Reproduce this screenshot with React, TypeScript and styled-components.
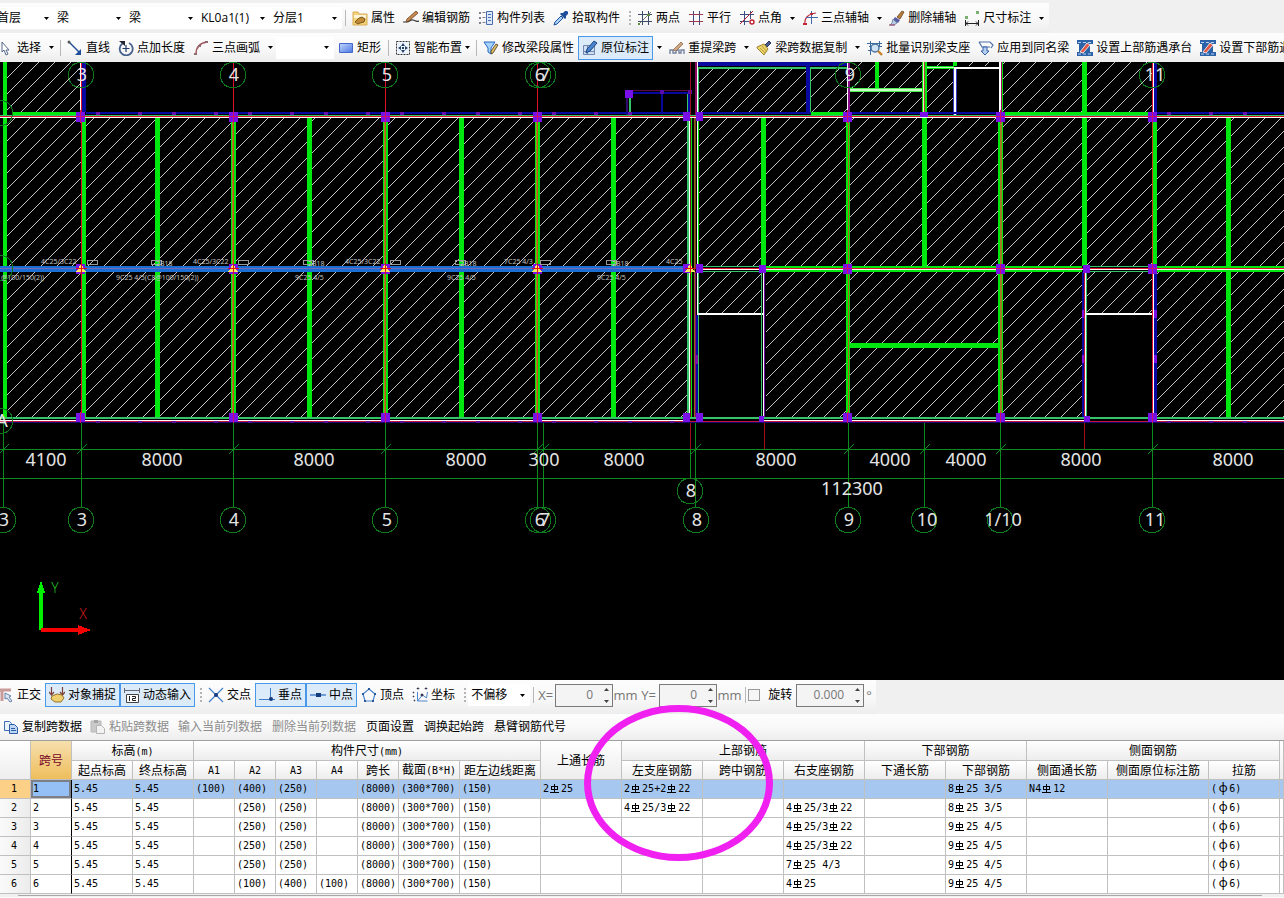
import React from "react";
import styled, { createGlobalStyle, css } from "styled-components";

const GlobalStyle = createGlobalStyle`
  *, *::before, *::after { box-sizing: border-box; }
  body { margin: 0; background: #f0f0f0; }
  button, input, select { font: inherit; color: inherit; }
`;

const Page = styled.div`
  display: flex;
  flex-direction: column;
  min-height: 100vh;
  overflow: hidden;
  font-family: "Open Sans", "Noto Sans CJK SC", sans-serif;
  font-size: 12px;
  line-height: 16px;
  color: #000;
`;

/* ---------- toolbars ---------- */

const ToolRow = styled.div<{ $h: number; $fit?: boolean; $top?: number; $lift?: number; $indent?: number }>`
  display: flex;
  align-items: center;
  flex: none;
  height: ${(p) => p.$h}px;
  margin-top: ${(p) => p.$top ?? 0}px;
  width: ${(p) => (p.$fit ? "fit-content" : "auto")};
  margin-left: -6px;
  padding: 0 2px ${(p) => p.$lift ?? 0}px ${(p) => p.$indent ?? 0}px;
  white-space: nowrap;
  background: linear-gradient(#fdfdfd, #f9f9f9 50%, #ededed);
`;

const ToolButton = styled.button<{ $active?: boolean; $textOnly?: boolean }>`
  display: flex;
  align-items: center;
  flex: none;
  gap: 3px;
  height: 24px;
  padding: 0 ${(p) => (p.$textOnly ? 5 : 4)}px;
  border: 0;
  background: transparent;
  white-space: nowrap;
  &:disabled { color: #8c8c8c; }
  ${(p) =>
    p.$active &&
    css`
      background: #dcebf9;
      box-shadow: inset 0 0 0 1px #4a98e8;
    `}
`;

const CaretButton = styled.button`
  display: flex;
  align-items: center;
  flex: none;
  height: 24px;
  border: 0;
  background: transparent;
  padding: 0 3px 0 4px;
`;

const Separator = styled.span`
  flex: none;
  width: 6px;
  height: 16px;
  background: linear-gradient(#b8b8b8, #b8b8b8) 3px 0 / 1px 100% no-repeat;
`;

const Grip = styled.span`
  flex: none;
  width: 9px;
  height: 15px;
  background: repeating-linear-gradient(#b4b4b4 0 2px, transparent 2px 4px) 5px 0 / 2px 100% no-repeat;
`;

const ComboBox = styled.span<{ $w: number }>`
  display: grid;
  flex: none;
  align-items: center;
  width: ${(p) => p.$w}px;
  height: 22px;
  background: #fff;
  > * { grid-area: 1 / 1; }
  > svg { justify-self: end; margin-right: 5px; pointer-events: none; }
`;

const Select = styled.select`
  appearance: none;
  width: 100%;
  height: 22px;
  padding: 0 3px;
  border: 0;
  background: transparent;
`;

const Caret = () => (
  <svg width="5" height="3" aria-hidden="true">
    <path d="M0 0h5L2.5 3z" fill="#000" />
  </svg>
);

const Combo = ({ w, value, label }: { w: number; value: string; label: string }) => (
  <ComboBox $w={w}>
    <Select aria-label={label} defaultValue={value}>
      <option value={value}>{value}</option>
    </Select>
    <Caret />
  </ComboBox>
);

const UnitLabel = styled.label<{ $w: number }>`
  flex: none;
  width: ${(p) => p.$w}px;
  text-align: center;
  color: #777;
  font-size: 13px;
`;

const SpinBox = styled.span<{ $w: number }>`
  display: flex;
  flex: none;
  width: ${(p) => p.$w}px;
  height: 23px;
  border: 1px solid #7a7a7a;
  background: #f4f4f4;
  color: #777;
`;

const SpinInput = styled.input`
  flex: 1;
  min-width: 0;
  border: 0;
  padding: 0 8px 0 0;
  background: transparent;
  text-align: right;
`;

const SpinArrows = styled.span`
  display: flex;
  flex-direction: column;
  justify-content: space-between;
  align-items: center;
  width: 11px;
  padding: 3px 0;
`;

const CheckBox = styled.input`
  appearance: none;
  flex: none;
  width: 12px;
  height: 12px;
  margin: 0 8px 0 0;
  border: 1px solid #9a9a9a;
  background: #f6f6f6;
`;

const PlainLabel = styled.label`
  flex: none;
  margin-right: 4px;
`;

const Spin = ({ id, w, value }: { id: string; w: number; value: string }) => (
  <SpinBox $w={w}>
    <SpinInput id={id} defaultValue={value} />
    <SpinArrows>
      <svg width="5" height="3" aria-hidden="true"><path d="M0 3h5L2.5 0z" fill="#444" /></svg>
      <svg width="5" height="3" aria-hidden="true"><path d="M0 0h5L2.5 3z" fill="#444" /></svg>
    </SpinArrows>
  </SpinBox>
);

/* ---------- icons ---------- */

const navy = "#1f4e9a";
const icons: Record<string, React.ReactNode> = {
  props: (
    <>
      <path d="M1 2h5l1 2h8v11H1z" fill="#f4d27a" stroke="#d8ac55" />
      <path d="M2 5h12v3H2z" fill="#fff6da" />
      <path d="M3 12l4-4 3-1 3 2-1 3-4 1-2 1z" fill="#c28a35" stroke="#5f430f" strokeWidth=".8" />
    </>
  ),
  edit: (
    <>
      <path d="M0 12h4c3 0 3-3 6-2s3 2 6 1" fill="none" stroke="#333" strokeWidth="1.2" />
      <path d="M4 9L13 1l2 2-9 8-3 1z" fill="#c48a50" stroke="#6d4420" strokeWidth=".8" />
    </>
  ),
  list: (
    <>
      <path d="M1 2h2v2H1zM1 7h2v2H1zM1 12h2v2H1z" fill="#7c8290" />
      <path d="M4.500 2.500h3M4.500 7.500h3M4.500 12.500h3" stroke="#7c8290" />
      <path d="M8.500 1.500h6v13h-6z" fill="#dbe8fa" stroke="#4a6db0" />
      <path d="M10 4.500h3M10 7.500h3M10 10.500h3" stroke="#4a6db0" />
    </>
  ),
  picker: (
    <>
      <path d="M1 15l1-3 6-6 2 2-6 6z" fill="#a9d4f7" stroke={navy} />
      <path d="M8 3l2 0 2-2h2l1 1v2l-2 2v2l-1 1-5-5z" fill={navy} />
    </>
  ),
  twoPoint: (
    <>
      <path d="M5.500 1v14M11.500 1v14M1 4.500h14M1 11.500h14" stroke="#3d4a6c" />
      <path d="M2 14L14 2" stroke="#555" strokeWidth=".8" />
      <path d="M1 13h2v2H1zM10 4h3v2h-3z" fill="#5d8a3c" />
    </>
  ),
  parallel: (
    <>
      <path d="M5.500 1v14M11.500 1v14" stroke="#3b4d80" />
      <path d="M1 4.500h14M1 11.500h14" stroke="#a33a4b" />
    </>
  ),
  angle: (
    <>
      <path d="M5.500 1v14M11.500 1v8M1 4.500h14M1 11.500h9" stroke="#3b4d80" />
      <path d="M1 14L14 1" stroke="#b32030" />
      <circle cx="13" cy="12" r="2" fill="#fff" stroke="#c02030" strokeWidth="1.4" />
    </>
  ),
  arcAxis: (
    <>
      <path d="M3 15C2 8 6 4 14 3" fill="none" stroke="#c0283a" strokeWidth="1.2" />
      <path d="M9.500 1v13M4 7.500h12" stroke="#4768a8" />
      <path d="M1 13h4v2H1zM8 3h3v2H8z" fill="#c0283a" />
    </>
  ),
  brush: (
    <>
      <path d="M8 7l5-6 2 1-4 7z" fill="#b7813d" stroke="#6b4420" strokeWidth=".8" />
      <path d="M6 7l5 3-2 3-5-3z" fill="#5a5fa5" />
      <path d="M4 9l4 4-3 2-4 0 2-2z" fill="#b9cde6" stroke="#62779c" strokeWidth=".8" />
      <path d="M0 15h6" stroke="#a04060" />
    </>
  ),
  dim: (
    <>
      <path d="M1.500 10v6M14.500 10v6M1 13.500h14M4 11.500l-2 2 2 2M12 11.500l2 2-2 2" fill="none" stroke="#222" />
      <path d="M1 6h3v3H1zM12 1h3v3h-3z" fill="#7ab070" />
    </>
  ),
  cursor: <path d="M4 2v10l2-2 2 5 2-1-2-4h3z" fill="#fff" stroke="#56698c" />,
  line: (
    <>
      <path d="M2 2l11 11" stroke={navy} strokeWidth="1.4" />
      <path d="M14 9v6H8z" fill={navy} />
      <circle cx="2" cy="2" r="1.5" fill="#555" />
    </>
  ),
  pointLen: (
    <>
      <path d="M11 3a6.500 6.500 0 1 1-6.500 .5" fill="none" stroke="#47618f" strokeWidth="1.8" />
      <path d="M1 1h6v5z" fill="#223" />
      <path d="M8 5v7M4.500 8.500h7" stroke="#223c70" strokeWidth="1.2" />
    </>
  ),
  arc: (
    <>
      <path d="M3 14C3 7 7 3 14 2" fill="none" stroke="#a1585e" strokeWidth="1.4" />
      <path d="M1 13h3v2H1zM5 5h3v2H5zM12 1h3v2h-3z" fill="#8b6b70" />
    </>
  ),
  rect: (
    <>
      <defs>
        <linearGradient id="rectFill" x1="0" y1="0" x2="1" y2="1">
          <stop offset="0" stopColor="#c4d8fc" />
          <stop offset="1" stopColor="#4a78e4" />
        </linearGradient>
      </defs>
      <path d="M1.500 3.500h13v9h-13z" fill="url(#rectFill)" stroke="#4668c8" />
    </>
  ),
  smart: (
    <>
      <path d="M1.500 1.500h13v13h-13z" fill="#eef4fc" stroke="#333" strokeDasharray="2 1" />
      <path d="M8 3l2 3H6zM8 13l2-3H6zM3 8l3-2v4zM13 8l-3-2v4zM7 7h2v2H7z" fill="#24406c" />
    </>
  ),
  modify: (
    <>
      <path d="M1 2h11L8 8v6l-3-2V8z" fill="#a5d3fb" stroke="#2868c0" />
      <path d="M8 11l5-7 2 1-5 8-2 1z" fill="#e0bc62" stroke="#443a20" strokeWidth=".8" />
    </>
  ),
  origin: (
    <>
      <path d="M1.500 5.500h11v9h-11z" fill="#cddff3" stroke="#7087b0" />
      <path d="M2 11.500h10M5.500 6v8" stroke="#7087b0" />
      <path d="M5 9l7-8 3 2-7 8-4 2z" fill="#4a86cf" stroke="#1c4580" />
    </>
  ),
  respan: (
    <>
      <path d="M1 14v-4h3v3h3v-3h3v3h2v-3h3v4" fill="none" stroke="#7483a0" strokeWidth="1.4" />
      <path d="M4 10l8-8 2 2-7 7z" fill="#cfa57f" stroke="#8a6c58" strokeWidth=".8" />
    </>
  ),
  sweep: (
    <>
      <path d="M9 5l4-4 2 2-4 4z" fill="#4a5a8a" stroke="#2a3560" />
      <path d="M1 7l7-3 4 5-4 6-7-7z" fill="#ecd469" stroke="#9c8430" />
      <path d="M4 8l5 5M6 6l5 6" stroke="#a98f35" strokeWidth=".8" />
    </>
  ),
  batch: (
    <>
      <path d="M0 3.500h15M2 6.500h13M1 10.500h4M3.500 1v14M12.500 1v5" stroke="#3d6a9c" />
      <circle cx="8" cy="8" r="4" fill="#cfe3f5" stroke="#47719c" strokeWidth="1.4" />
      <path d="M11 11l4 4" stroke="#c4832a" strokeWidth="2.400" />
    </>
  ),
  apply: (
    <>
      <path d="M1 2h11l3 3-2 3M1 2l3 5h8" fill="none" stroke="#4d6fa8" strokeWidth="1.2" />
      <path d="M5 7v4H3l4 4 4-4H9V7z" fill="#b4d0f2" stroke="#3961a8" />
    </>
  ),
  setBar: (
    <>
      <path d="M0 0h16v4h-3v8h3v4H0v-4h2V4H0z" fill="#2c62a8" />
      <path d="M1 2.500h14M1 14h14" stroke="#b7d2f0" strokeDasharray="3 2" />
      <path d="M3 12l7-9 3 2-7 8z" fill="#e45543" stroke="#fff" strokeWidth=".8" />
    </>
  ),
  ortho: (
    <>
      <path d="M1 3h12M4 3v11" stroke="#c99a9a" strokeWidth="3" />
      <path d="M7 6v6l2-1 3 4 2-1-3-4 2-1z" fill="#dfe9f6" stroke="#6782aa" />
    </>
  ),
  snap: (
    <>
      <path d="M2.500 0v8M13.500 0v8M0 5l2.500 3L5 5M11 5l2.500 3L16 5" fill="none" stroke="#7c4038" strokeWidth="1.200" />
      <path d="M3 9l5-2 5 1 2 3-3 4H6l-4-3z" fill="#efcf6e" stroke="#97742a" />
    </>
  ),
  dyn: (
    <>
      <path d="M.5 1v5M15.500 1v5M1 3.500h14" stroke="#667" />
      <path d="M2.500 7.500h12v8h-12z" fill="#fff" stroke="#444" />
      <path d="M5.500 9v5M8 9.500h3.500v2H8.500v2H12" fill="none" stroke="#222" />
    </>
  ),
  cross: (
    <>
      <path d="M1 1l14 14M15 1L1 15" stroke="#4682c8" strokeWidth="1.300" />
      <circle cx="8" cy="8" r="2" fill="#143c80" />
    </>
  ),
  perp: (
    <>
      <path d="M0 12.500h16M11.500 1v11" stroke="#3f7cc8" />
      <circle cx="12" cy="12" r="2" fill="#143c80" />
    </>
  ),
  mid: (
    <>
      <path d="M0 8h16" stroke="#3f7cc8" strokeWidth="1.400" />
      <path d="M6 6h5v4H6z" fill="#143c80" />
    </>
  ),
  vertex: (
    <>
      <path d="M8 2l6 5-2 7H4L2 7z" fill="none" stroke="#4d86cc" strokeWidth="1.200" />
      <path d="M7 1h2v2H7zM13 6h2v2h-2zM11 13h2v2h-2zM3 13h2v2H3zM1 6h2v2H1z" fill="#2b5a9c" />
    </>
  ),
  coord: (
    <>
      <path d="M5.500 5v9h10M5.500 14l5-6 4 3 1-6" fill="none" stroke="#4d86cc" />
      <path d="M1 5h1v1H1zM1 9h1v1H1zM2 13h1v1H2zM5 1h2v1H5zM13 1h2v1h-2zM9 7h2v2H9z" fill="#223" stroke="#446" strokeWidth=".6" />
    </>
  ),
  copy: (
    <>
      <path d="M1.500 2.500h5l2 2v7h-7z" fill="#e9f1fc" stroke="#3d6cb0" />
      <path d="M6.500 5.500h5l3 3v6h-8z" fill="#bfd6f4" stroke="#2c5ca5" />
      <path d="M8 9.500h4M8 11.500h5" stroke="#2c5ca5" />
    </>
  ),
  paste: (
    <>
      <path d="M1 2h10v11H1z" fill="#c9c9c9" stroke="#b8b8b8" />
      <path d="M4 1h4v3H4z" fill="#a4a4a4" />
      <path d="M6.500 6.500h5l3 3v5h-8z" fill="#f2f2f2" stroke="#b4b4b4" />
    </>
  ),
};

const Icon = ({ name }: { name: string }) => (
  <svg width="16" height="16" viewBox="0 0 16 16" aria-hidden="true">
    {icons[name]}
  </svg>
);

const CaretSlot = styled.span<{ $tight?: boolean }>`
  display: flex;
  margin-left: ${(p) => (p.$tight ? 0 : 5)}px;
  margin-right: -1px;
`;

type ToolProps = {
  icon?: string;
  label: string;
  menu?: boolean;
  tight?: boolean;
  active?: boolean;
  disabled?: boolean;
};

const Tool = ({ icon, label, menu, tight, active, disabled }: ToolProps) => (
  <ToolButton $active={active} $textOnly={!icon} disabled={disabled} aria-pressed={active}>
    {icon && <Icon name={icon} />}
    {label}
    {menu && (
      <CaretSlot $tight={tight}>
        <Caret />
      </CaretSlot>
    )}
  </ToolButton>
);

/* ---------- drawing ---------- */

const Drawing = styled.svg`
  display: block;
  flex: 1 0 580px;
  width: 100%;
  background: #000;
`;

const G = "#00e810";
const TEAL = "#35c46a";
const BLUE = "#0808a0";
const RED = "#e01028";
const PUR = "#7a10e8";
const AXIS = "#0c8a1e";

const V = ({ x, a, b, w = 1, c }: { x: number; a: number; b: number; w?: number; c: string }) => (
  <rect x={x} y={a} width={w} height={b - a} fill={c} />
);
const H = ({ y, a, b, w = 1, c }: { y: number; a: number; b: number; w?: number; c: string }) => (
  <rect x={a} y={y} width={b - a} height={w} fill={c} />
);

const HATCH_STEP = 15.83;
const HATCH_PHASE = 6;
const hatchLines = Array.from({ length: 112 }, (_, i) => Math.round(HATCH_PHASE + i * HATCH_STEP));

/* [x, y, width, height] of every hatched slab */
const slabs: number[][] = [
  [7, 62, 74, 50], [699, 69, 107, 43], [811, 69, 36, 43], [850, 62, 72, 50],
  [927, 62, 27, 50], [957, 62, 43, 4], [1003, 62, 149, 50],
  [6, 118, 684, 148], [699, 118, 585, 148],
  [6, 272, 682, 145], [699, 272, 63, 41], [766, 272, 316, 145],
  [1087, 272, 65, 41], [1157, 272, 127, 145],
];

const bubble = (cx: number, cy: number) =>
  Array.from({ length: 14 }, (_, i) => {
    const t = ((i + 0.5) / 14) * Math.PI * 2;
    return `${(cx + 13 * Math.sin(t)).toFixed(1)},${(cy + 13 * Math.cos(t)).toFixed(1)}`;
  }).join(" ");

const bubbles: number[][] = [
  [81, 75], [233, 75], [385, 75], [538, 75], [543, 75], [848, 75], [1152, 75],
  [3, 520], [81, 520], [233, 520], [385, 520], [538, 520], [543, 520], [690, 491],
  [696, 520], [848, 520], [924, 520], [1000, 520], [1152, 520],
  [0, 113], [0, 268], [0, 421],
];

const bubbleText: [number, number, string][] = [
  [82, 75, "3"], [234, 75, "4"], [387, 75, "5"], [540, 75, "6"], [545, 75, "7"], [850, 75, "9"], [1155, 75, "11"],
  [4, 520, "3"], [82, 520, "3"], [234, 520, "4"], [387, 520, "5"], [540, 520, "6"], [545, 520, "7"],
  [691, 491, "8"], [697, 520, "8"], [849, 520, "9"], [927, 520, "10"], [1003, 520, "1/10"], [1155, 520, "11"],
  [2, 421, "A"],
];

const dims: [number, number, string][] = [
  [46, 459, "4100"], [162, 459, "8000"], [314, 459, "8000"], [466, 459, "8000"], [544, 459, "300"],
  [624, 459, "8000"], [776, 459, "8000"], [890, 459, "4000"], [966, 459, "4000"], [1081, 459, "8000"],
  [1233, 459, "8000"], [852, 488, "112300"],
];

const notes: [number, number, string][] = [
  [41, 264, "4C25/3C22"], [193, 264, "4C25/3C22"], [345, 264, "4C25/3C22"], [504, 264, "7C25 4/3"],
  [666, 264, "4C25"], [156, 266, "2B18"], [308, 266, "2B18"], [460, 266, "2B18"], [612, 266, "2B18"],
  [1, 280, "@100/150(2))"], [116, 280, "9C25 4/5(C8@100/150(2))"], [295, 280, "9C25 4/5"],
  [447, 280, "9C25 4/5"], [597, 280, "9C25 4/5"],
];

const Plan = () => (
  <Drawing role="img" aria-label="梁平面图">
    <defs>
      <clipPath id="slabs">
        {slabs.map(([x, y, w, h], i) => (
          <rect key={i} x={x} y={y} width={w} height={h} />
        ))}
      </clipPath>
    </defs>
    <g transform="translate(0 -62)" shapeRendering="crispEdges">
      <g clipPath="url(#slabs)" stroke="#c4c4c4">
        {hatchLines.map((c) => (
          <line key={c} x1={c - 62} y1={62} x2={c - 430} y2={430} />
        ))}
      </g>

      {/* axis lines below the plan */}
      <H y={449} a={0} b={2600} c={AXIS} />
      <H y={478} a={0} b={2600} c={AXIS} />
      {[3, 81, 233, 385, 537, 543, 695, 848, 924, 1000, 1152].map((x) => (
        <React.Fragment key={x}>
          <V x={x} a={422} b={507} c={AXIS} />
          <line x1={x - 4} y1={454} x2={x + 6} y2={444} stroke={AXIS} />
        </React.Fragment>
      ))}
      <V x={690} a={422} b={449} c="#a00c18" />
      <V x={690} a={449} b={478} c={AXIS} />
      <V x={764} a={422} b={449} c="#a00c18" />
      <V x={1084} a={422} b={449} c="#a00c18" />

      {/* rooms above the top beam */}
      <V x={3} a={62} b={418} w={4} c={G} />
      <H y={112} a={12} b={77} w={4} c={G} />
      <V x={80} a={62} b={116} c="#fff" />
      <V x={81} a={62} b={116} c={RED} />
      <V x={82} a={62} b={112} w={4} c={BLUE} />
      <V x={233} a={62} b={116} c={RED} />
      <V x={385} a={62} b={116} c={RED} />
      <V x={537} a={62} b={116} c={RED} />
      <H y={90} a={632} b={690} c="#600848" />
      <H y={92} a={632} b={690} w={2} c={BLUE} />
      <V x={626} a={97} b={116} w={2} c="#300a70" />
      <V x={629} a={97} b={112} w={2} c={TEAL} />
      <V x={661} a={94} b={112} w={2} c={BLUE} />
      <V x={687} a={94} b={112} c={TEAL} />
      <V x={688} a={94} b={112} w={2} c={BLUE} />
      <rect x={625} y={90} width={8} height={8} fill={PUR} />
      <rect x={660} y={90} width={4} height={4} fill="#5a0ca8" />
      <rect x={688} y={90} width={4} height={4} fill="#5a0ca8" />
      <V x={690} a={62} b={116} c="#a00c28" />
      <V x={695} a={62} b={116} w={2} c="#8a0c60" />
      <V x={697} a={62} b={315} c="#fff" />
      <V x={698} a={68} b={112} c={TEAL} />
      <H y={62} a={698} b={848} w={4} c={BLUE} />
      <H y={67} a={698} b={848} w={2} c={TEAL} />
      <V x={806} a={62} b={112} w={4} c={BLUE} />
      <V x={810} a={69} b={112} c={TEAL} />
      <H y={112} a={811} b={844} w={4} c={G} />
      <V x={847} a={62} b={116} c="#fff" />
      <V x={848} a={62} b={116} w={2} c="#8a0c88" />
      <V x={875} a={62} b={88} w={4} c={G} />
      <H y={88} a={850} b={923} w={4} c="#50f050" />
      <H y={89} a={850} b={923} w={2} c="#c8ffc8" />
      <V x={922} a={62} b={112} w={5} c={G} />
      <V x={923} a={62} b={112} c="#e8f0c0" />
      <V x={924} a={62} b={112} c="#b04030" />
      <V x={953} a={62} b={66} w={4} c={G} />
      <H y={66} a={927} b={954} w={3} c={G} />
      <H y={67} a={927} b={954} c="#c8ffc8" />
      <H y={67} a={954} b={1000} w={2} c="#fff" />
      <V x={953} a={69} b={115} w={4} c="#3838c0" />
      <V x={954} a={67} b={115} w={2} c="#fff" />
      <V x={999} a={62} b={116} w={2} c="#fff" />
      <V x={1001} a={62} b={116} c="#a00c60" />
      <V x={1002} a={62} b={116} c={G} />
      <H y={112} a={1005} b={1148} w={4} c={G} />
      <V x={1082} a={62} b={112} w={5} c={G} />
      <V x={1152} a={62} b={116} c={RED} />
      <V x={1153} a={62} b={116} c="#fff" />
      <V x={1154} a={62} b={112} w={3} c={BLUE} />

      {/* top beam */}
      <H y={112} a={86} b={690} w={2} c={BLUE} />
      <H y={112} a={697} b={811} w={2} c={BLUE} />
      <H y={112} a={850} b={1000} w={2} c={BLUE} />
      <H y={112} a={1157} b={2600} w={2} c={BLUE} />
      <H y={115} a={0} b={2600} c={TEAL} />
      <H y={116} a={0} b={2600} c={RED} />
      <H y={117} a={0} b={2600} c="#fff" />

      {/* secondary beams */}
      {[155, 307, 459, 611].map((x) => (
        <V key={x} x={x} a={118} b={417} w={5} c={G} />
      ))}
      <V x={82} a={118} b={417} w={4} c={G} />
      <V x={81} a={118} b={417} c={RED} />
      {[231, 383, 535].map((x) => (
        <React.Fragment key={x}>
          <V x={x} a={118} b={417} w={5} c={G} />
          <V x={x + 1} a={118} b={417} w={2} c="#a08c20" />
          <V x={x + 2} a={118} b={417} c="#c05018" />
        </React.Fragment>
      ))}
      <V x={687} a={118} b={418} w={2} c={TEAL} />
      <V x={689} a={118} b={420} c="#fff" />
      <V x={690} a={118} b={420} c="#700c18" />
      <V x={691} a={118} b={420} c={G} />
      <V x={692} a={118} b={420} w={5} c="#000" />
      <V x={694} a={118} b={420} c="#8a6a18" />
      <V x={695} a={118} b={268} c="#704818" />
      <V x={698} a={118} b={266} c={G} />
      <V x={761} a={118} b={266} w={5} c={G} />
      <V x={846} a={118} b={417} w={4} c={G} />
      <V x={848} a={118} b={417} c="#b06018" />
      <V x={922} a={118} b={266} w={5} c={G} />
      <V x={998} a={118} b={417} w={5} c={G} />
      <V x={1000} a={118} b={417} w={2} c="#a07c20" />
      <V x={1082} a={118} b={266} w={5} c={G} />
      <V x={1152} a={118} b={266} c="#c04018" />
      <V x={1153} a={118} b={266} w={4} c={G} />
      <V x={1226} a={118} b={417} w={5} c={G} />
      <H y={343} a={850} b={998} w={5} c={G} />

      {/* stair openings */}
      <V x={695} a={272} b={418} c="#8a0c70" />
      <V x={696} a={315} b={418} w={2} c={BLUE} />
      <V x={698} a={272} b={418} c={TEAL} />
      <H y={313} a={697} b={764} w={2} c="#fff" />
      <V x={761} a={272} b={418} c={TEAL} />
      <V x={763} a={270} b={420} c="#fff" />
      <V x={764} a={272} b={418} c="#6a10a8" />
      <rect x={695} y={355} width={3} height={9} fill="#7a10a8" />
      <V x={1082} a={272} b={418} w={2} c={BLUE} />
      <V x={1084} a={272} b={418} c="#c01030" />
      <V x={1085} a={270} b={420} c="#fff" />
      <V x={1086} a={272} b={418} c={TEAL} />
      <H y={313} a={1086} b={1153} w={2} c="#fff" />
      <V x={1152} a={272} b={420} c={RED} />
      <V x={1153} a={272} b={420} c="#fff" />
      <V x={1154} a={272} b={418} w={3} c={BLUE} />
      {[310, 355].map((y) => (
        <React.Fragment key={y}>
          <rect x={1082} y={y} width={2} height={8} fill={PUR} />
          <rect x={1154} y={y} width={3} height={8} fill={PUR} />
        </React.Fragment>
      ))}

      {/* middle beam */}
      <H y={266} a={0} b={690} w={6} c="#1a6ed4" />
      <H y={268} a={0} b={690} c="#7868b8" />
      <H y={266} a={697} b={762} c={TEAL} />
      <H y={271} a={697} b={762} c={TEAL} />
      <H y={266} a={766} b={1082} w={6} c={G} />
      <H y={266} a={1087} b={1150} c={TEAL} />
      <H y={271} a={1087} b={1150} c={TEAL} />
      <H y={266} a={1157} b={2600} w={6} c={G} />
      <H y={268} a={690} b={2600} c={RED} />
      <H y={269} a={697} b={2600} c="#fff" />

      {/* bottom beam */}
      <H y={417} a={0} b={2600} w={2} c={TEAL} />
      <H y={419} a={0} b={2600} c="#000" />
      <H y={420} a={0} b={690} c="#fff" />
      <H y={420} a={764} b={1086} c="#fff" />
      <H y={420} a={1153} b={2600} c="#fff" />
      <H y={421} a={0} b={2600} c="#c01040" />
      <H y={422} a={0} b={2600} c="#18086c" />

      {/* columns */}
      {[76, 229, 381, 533, 843, 996, 1148].map((x) => (
        <React.Fragment key={x}>
          <rect x={x} y={112} width={9} height={10} fill={PUR} />
          <rect x={x} y={264} width={9} height={10} fill={PUR} />
          <rect x={x} y={413} width={9} height={9} fill={PUR} />
          <path d={`M${x + 4} 110h1v13h-1zM${x + 4} 264h1v10h-1zM${x + 4} 412h1v11h-1zM${x} 116h9v1h-9zM${x} 268h9v1h-9z`} fill="#d01068" />
        </React.Fragment>
      ))}
      {[112, 264, 413].map((y) => (
        <React.Fragment key={y}>
          <rect x={683} y={y} width={7} height={9} fill={PUR} />
          <rect x={696} y={y} width={7} height={9} fill={PUR} />
        </React.Fragment>
      ))}
      <rect x={920} y={112} width={8} height={5} fill={PUR} />
      <rect x={759} y={265} width={7} height={8} fill={PUR} />
      <rect x={759} y={416} width={5} height={6} fill={PUR} />
      <rect x={1083} y={265} width={7} height={8} fill={PUR} />
      <rect x={1084} y={416} width={6} height={6} fill={PUR} />
      {[81, 233, 385, 537, 1152].map((x) =>
        [15, 57, 91, 133].map((d) => (
          <React.Fragment key={x + d}>
            {x + d < 630 || x > 1000 ? <rect x={x + d} y={112} width={4} height={3} fill="#6a10b0" /> : null}
            <rect x={x + d} y={421} width={4} height={2} fill="#5a1090" />
          </React.Fragment>
        )),
      )}
      {[81, 233, 385, 537, 690].map((x) => (
        <React.Fragment key={x}>
          <path d={`M${x} 264l5 8h-10z`} fill="#ffe860" />
          <path d={`M${x} 263h1v11h-1zM${x - 5} 268h11v1h-11z`} fill="#e01010" />
        </React.Fragment>
      ))}
      {[87, 238, 390, 540, 151, 303, 455, 606].map((x) => (
        <rect key={x} x={x} y={260} width={10} height={4} fill="none" stroke="#9a9a9a" />
      ))}

      <g fill="none" stroke="#0d7a1c">
        {bubbles.map(([x, y], i) => (
          <polygon key={i} points={bubble(x, y)} />
        ))}
      </g>

      <g fill="#e4e4e4" fontFamily='"Noto Sans", sans-serif' fontSize="18" textAnchor="middle">
        {bubbleText.map(([x, y, t]) => (
          <text key={`${x}-${y}`} x={x} y={y + 6}>{t}</text>
        ))}
        {dims.map(([x, y, t]) => (
          <text key={`${x}-${y}`} x={x} y={y + 7}>{t}</text>
        ))}
      </g>
      <g fill="#c4c4c4" fontFamily='"Noto Sans", sans-serif' fontSize="7">
        {notes.map(([x, y, t]) => (
          <text key={`${x}-${y}`} x={x} y={y}>{t}</text>
        ))}
      </g>

      {/* coordinate axes */}
      <V x={39} a={592} b={630} w={4} c="#00f000" />
      <path d="M41 580l4 13h-8z" fill="#00f000" />
      <H y={628} a={41} b={79} w={4} c="#f80000" />
      <path d="M91 630l-13-5v10z" fill="#f80000" />
      <g fontFamily='"Open Sans", sans-serif' fontWeight="300" fontSize="14" textAnchor="middle">
        <text x={55} y={593} fill="#20d020">Y</text>
        <text x={83} y={619} fill="#e02020">X</text>
      </g>
    </g>
  </Drawing>
);

/* ---------- span table ---------- */

const DataPanel = styled.section`
  position: relative;
  flex: none;
`;

const Table = styled.table`
  table-layout: fixed;
  width: 100%;
  border-collapse: separate;
  border-spacing: 0;
  border-top: 1px solid #a0a0a0;
  background: #fff;
  white-space: nowrap;
`;

const HeadCell = styled.th<{ $mark?: boolean }>`
  height: 19px;
  padding: 1px 0 0;
  overflow: hidden;
  border-right: 1px solid #c0c0c0;
  border-bottom: 1px solid #c0c0c0;
  background: ${(p) => (p.$mark ? "linear-gradient(#f6dfae, #eebe5c)" : "linear-gradient(#fff, #ededed)")};
  color: ${(p) => (p.$mark ? "#780828" : "#000")};
  font-weight: 400;
  line-height: 16px;
`;

const HeadRow = styled.tr<{ $h: number }>`
  height: ${(p) => p.$h}px;
`;

const mono = css`
  font-family: "DejaVu Sans Mono", monospace;
  font-size: 10px;
`;

const Latin = styled.span`
  ${mono}
`;

const RowHead = styled.th<{ $on?: boolean }>`
  ${mono}
  height: 19px;
  padding: 0 2px 0 0;
  border-right: 1px solid #c0c0c0;
  border-bottom: 1px solid #c0c0c0;
  background: ${(p) => (p.$on ? "#fcd086" : "linear-gradient(90deg, #fafafa, #ececec)")};
  font-weight: 400;
  line-height: 16px;
`;

const Cell = styled.td<{ $on?: boolean; $frozen?: boolean }>`
  ${mono}
  height: 19px;
  padding: 0 0 0 2px;
  overflow: hidden;
  border-right: 1px solid ${(p) => (p.$frozen ? "#000" : "#c0c0c0")};
  border-bottom: 1px solid #c0c0c0;
  background: ${(p) => (p.$on ? "#a6c8f0" : "#fff")};
  line-height: 16px;
  ${(p) =>
    p.$on &&
    p.$frozen &&
    css`
      background: #94c0f5;
      box-shadow: inset 0 0 0 2px #7c7f86;
    `}
`;

const Diameter = styled.span`
  display: inline-block;
  width: 12px;
  font-family: "Noto Sans", sans-serif;
  font-size: 12px;
  line-height: 12px;
  text-align: center;
`;

const Rebar = styled.svg`
  display: inline-block;
  width: 12px;
  height: 9px;
  vertical-align: -1px;
`;

const ScrollTrack = styled.div`
  flex: none;
  height: 4px;
  border-bottom: 1px solid #fafafa;
  background: linear-gradient(#a8a8a8, #a8a8a8) 18px 1px / calc(100% - 40px) 1px no-repeat, #f0f0f0;
`;

const Highlight = styled.div`
  position: absolute;
  top: -9px;
  left: 584px;
  width: 189px;
  height: 156px;
  border: 7px solid #f020f0;
  border-radius: 50%;
  pointer-events: none;
`;

const widths = [31, 41, 61, 61, 41, 41, 41, 41, 41, 61, 81, 81, 81, 81, 81, 81, 81, 81, 101, 71];

/* "#" stands for the grade III bar sign, "ф" for the grade I one */
const rows: string[][] = [
  ["1", "5.45", "5.45", "(100)", "(400)", "(250)", "", "(8000)", "(300*700)", "(150)", "2#25", "2#25+2#22", "", "", "", "8#25 3/5", "N4#12", "", "(ф6)"],
  ["2", "5.45", "5.45", "", "(250)", "(250)", "", "(8000)", "(300*700)", "(150)", "", "4#25/3#22", "", "4#25/3#22", "", "8#25 3/5", "", "", "(ф6)"],
  ["3", "5.45", "5.45", "", "(250)", "(250)", "", "(8000)", "(300*700)", "(150)", "", "", "", "4#25/3#22", "", "9#25 4/5", "", "", "(ф6)"],
  ["4", "5.45", "5.45", "", "(250)", "(250)", "", "(8000)", "(300*700)", "(150)", "", "", "", "4#25/3#22", "", "9#25 4/5", "", "", "(ф6)"],
  ["5", "5.45", "5.45", "", "(250)", "(250)", "", "(8000)", "(300*700)", "(150)", "", "", "", "7#25 4/3", "", "9#25 4/5", "", "", "(ф6)"],
  ["6", "5.45", "5.45", "", "(100)", "(400)", "(100)", "(8000)", "(300*700)", "(150)", "", "", "", "4#25", "", "9#25 4/5", "", "", "(ф6)"],
];

const CellText = ({ text }: { text: string }) => (
  <>
    {text.split(/([#ф])/).map((part, i) => {
      if (part === "#")
        return (
          <Rebar key={i} viewBox="0 0 12 9" shapeRendering="crispEdges" role="img" aria-label="HRB400">
            <path d="M2 2h7v1H2zM2 5h7v1H2zM2 2h1v4H2zM8 2h1v4H8zM5 0h1v9H5zM1 8h9v1H1z" fill="#000" />
          </Rebar>
        );
      if (part === "ф") return <Diameter key={i}>ф</Diameter>;
      return <React.Fragment key={i}>{part}</React.Fragment>;
    })}
  </>
);

const SpanTable = () => (
  <Table>
    <colgroup>
      {widths.map((w, i) => (
        <col key={i} width={w} />
      ))}
      <col />
    </colgroup>
    <thead>
      <HeadRow $h={20}>
        <HeadCell rowSpan={2} aria-label="行号" />
        <HeadCell rowSpan={2} $mark>跨号</HeadCell>
        <HeadCell colSpan={2}>标高<Latin>(m)</Latin></HeadCell>
        <HeadCell colSpan={7}>构件尺寸<Latin>(mm)</Latin></HeadCell>
        <HeadCell rowSpan={2}>上通长筋</HeadCell>
        <HeadCell colSpan={3}>上部钢筋</HeadCell>
        <HeadCell colSpan={2}>下部钢筋</HeadCell>
        <HeadCell colSpan={3}>侧面钢筋</HeadCell>
        <HeadCell rowSpan={2} aria-label="更多" />
      </HeadRow>
      <HeadRow $h={19}>
        <HeadCell>起点标高</HeadCell>
        <HeadCell>终点标高</HeadCell>
        <HeadCell><Latin>A1</Latin></HeadCell>
        <HeadCell><Latin>A2</Latin></HeadCell>
        <HeadCell><Latin>A3</Latin></HeadCell>
        <HeadCell><Latin>A4</Latin></HeadCell>
        <HeadCell>跨长</HeadCell>
        <HeadCell>截面<Latin>(B*H)</Latin></HeadCell>
        <HeadCell>距左边线距离</HeadCell>
        <HeadCell>左支座钢筋</HeadCell>
        <HeadCell>跨中钢筋</HeadCell>
        <HeadCell>右支座钢筋</HeadCell>
        <HeadCell>下通长筋</HeadCell>
        <HeadCell>下部钢筋</HeadCell>
        <HeadCell>侧面通长筋</HeadCell>
        <HeadCell>侧面原位标注筋</HeadCell>
        <HeadCell>拉筋</HeadCell>
      </HeadRow>
    </thead>
    <tbody>
      {rows.map((row, r) => (
        <tr key={r}>
          <RowHead $on={r === 0}>{r + 1}</RowHead>
          {row.map((text, c) => (
            <Cell key={c} $on={r === 0} $frozen={c === 0}>
              <CellText text={text} />
            </Cell>
          ))}
          <Cell $on={r === 0} />
        </tr>
      ))}
    </tbody>
  </Table>
);

export default function App() {
  return (
    <Page>
      <GlobalStyle />
      <ToolRow $h={30} $top={3} $fit>
        <Combo w={60} value="首层" label="楼层" />
        <Combo w={72} value="梁" label="构件大类" />
        <Combo w={72} value="梁" label="构件类型" />
        <Combo w={72} value="KL0a1(1)" label="构件" />
        <Combo w={72} value="分层1" label="分层" />
        <Separator />
        <Tool icon="props" label="属性" />
        <Tool icon="edit" label="编辑钢筋" />
        <Tool icon="list" label="构件列表" />
        <Tool icon="picker" label="拾取构件" />
        <Grip />
        <Tool icon="twoPoint" label="两点" />
        <Tool icon="parallel" label="平行" />
        <Tool icon="angle" label="点角" menu />
        <Tool icon="arcAxis" label="三点辅轴" menu />
        <Tool icon="brush" label="删除辅轴" />
        <Tool icon="dim" label="尺寸标注" menu />
      </ToolRow>
      <ToolRow $h={29}>
        <Tool icon="cursor" label="选择" menu />
        <Separator />
        <Tool icon="line" label="直线" />
        <Tool icon="pointLen" label="点加长度" />
        <Tool icon="arc" label="三点画弧" menu />
        <Combo w={58} value="" label="画弧方式" />
        <Tool icon="rect" label="矩形" />
        <Separator />
        <Tool icon="smart" label="智能布置" menu tight />
        <Separator />
        <Tool icon="modify" label="修改梁段属性" />
        <Tool icon="origin" label="原位标注" active />
        <CaretButton aria-label="原位标注选项">
          <Caret />
        </CaretButton>
        <Tool icon="respan" label="重提梁跨" menu />
        <Tool icon="sweep" label="梁跨数据复制" menu />
        <Tool icon="batch" label="批量识别梁支座" />
        <Tool icon="apply" label="应用到同名梁" />
        <Tool icon="setBar" label="设置上部筋遇承台" />
        <Tool icon="setBar" label="设置下部筋遇承台" />
      </ToolRow>

      <Plan />

      <ToolRow $h={34} $lift={4} $fit>
        <Tool icon="ortho" label="正交" />
        <Tool icon="snap" label="对象捕捉" active />
        <Tool icon="dyn" label="动态输入" active />
        <Grip />
        <Tool icon="cross" label="交点" />
        <Tool icon="perp" label="垂点" active />
        <Tool icon="mid" label="中点" active />
        <Tool icon="vertex" label="顶点" />
        <Tool icon="coord" label="坐标" />
        <Grip />
        <Combo w={62} value="不偏移" label="偏移方式" />
        <Separator />
        <UnitLabel $w={19} htmlFor="dx">X=</UnitLabel>
        <Spin id="dx" w={58} value="0" />
        <UnitLabel $w={25} as="span">mm</UnitLabel>
        <UnitLabel $w={21} htmlFor="dy">Y=</UnitLabel>
        <Spin id="dy" w={58} value="0" />
        <UnitLabel $w={25} as="span">mm</UnitLabel>
        <Separator />
        <CheckBox type="checkbox" id="rot" />
        <PlainLabel htmlFor="rot">旋转</PlainLabel>
        <Spin id="angle" w={68} value="0.000" />
        <UnitLabel $w={10} htmlFor="angle">°</UnitLabel>
      </ToolRow>
      <DataPanel>
        <ToolRow $h={26} $indent={5}>
          <Tool icon="copy" label="复制跨数据" />
          <Tool icon="paste" label="粘贴跨数据" disabled />
          <Tool label="输入当前列数据" disabled />
          <Tool label="删除当前列数据" disabled />
          <Tool label="页面设置" />
          <Tool label="调换起始跨" />
          <Tool label="悬臂钢筋代号" />
        </ToolRow>
        <SpanTable />
        <Highlight />
      </DataPanel>
      <ScrollTrack />
    </Page>
  );
}
